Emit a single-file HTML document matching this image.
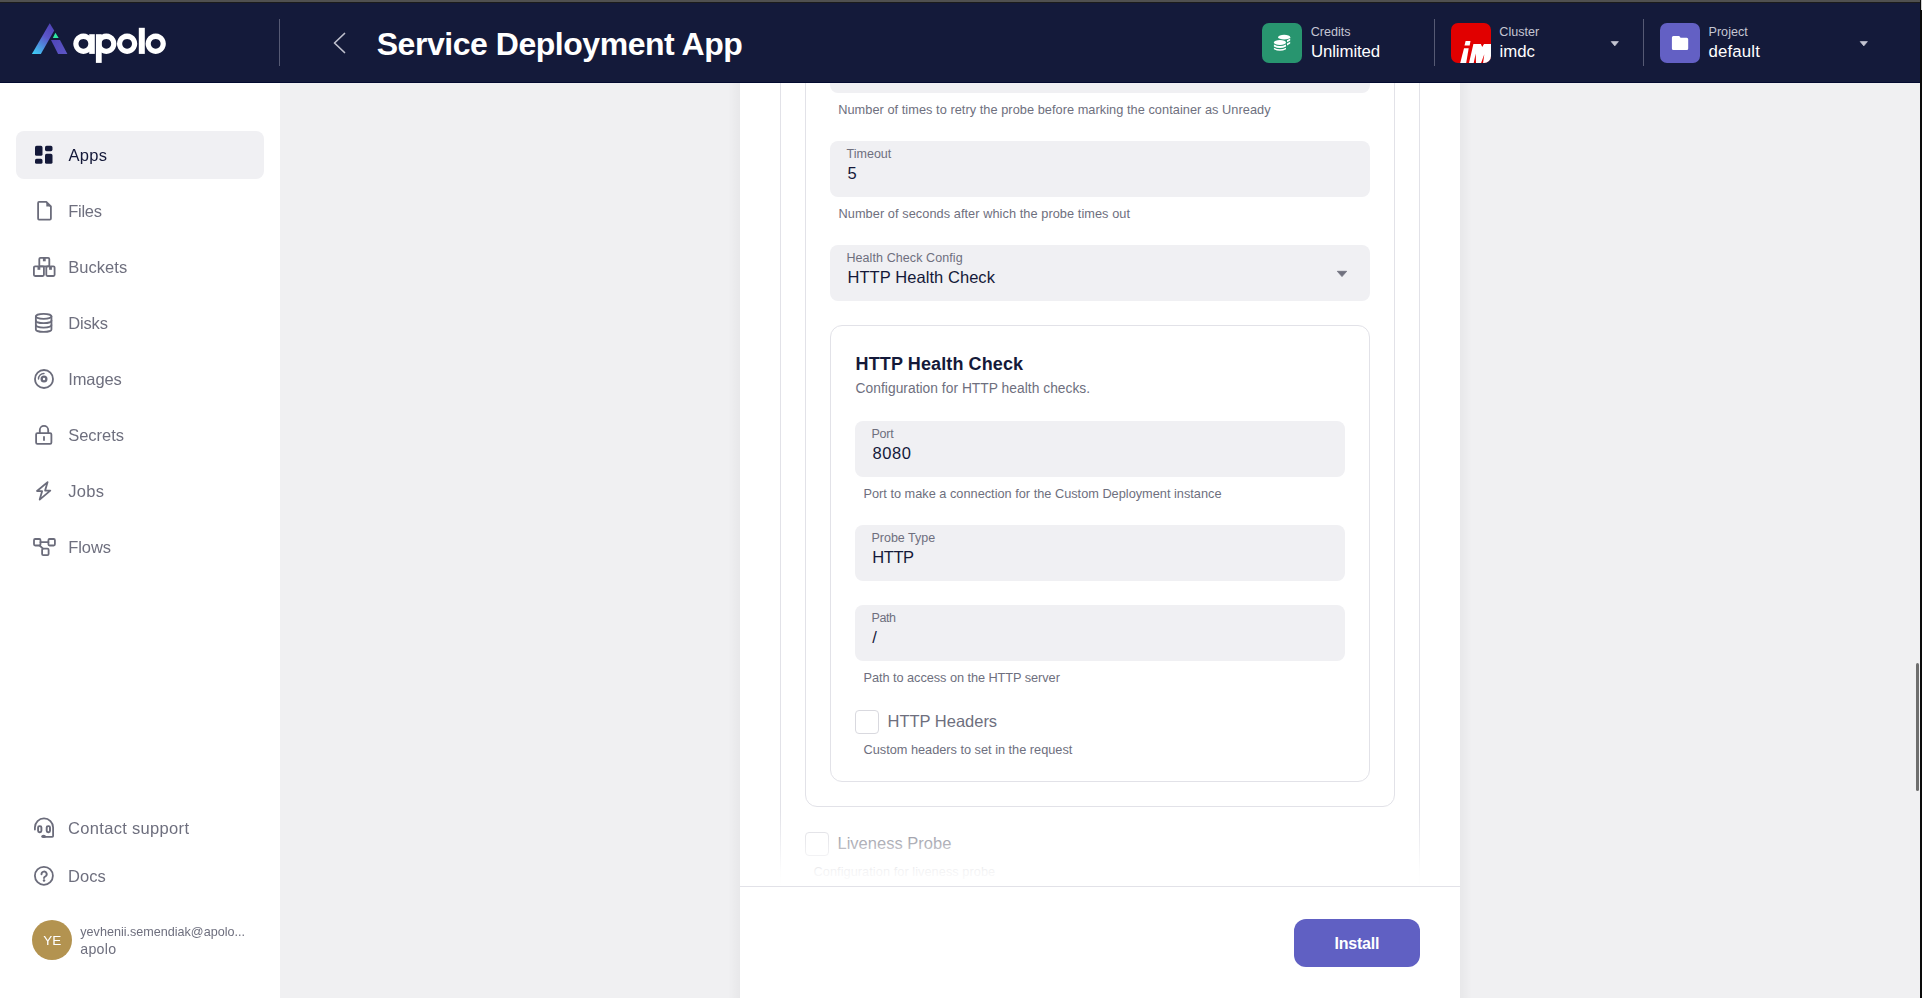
<!DOCTYPE html>
<html><head><meta charset="utf-8">
<style>
*{box-sizing:border-box;margin:0;padding:0}
html,body{width:1922px;height:998px;overflow:hidden;background:#f0f0f2;font-family:"Liberation Sans",sans-serif;position:relative}
.abs{position:absolute}
.t{position:absolute;white-space:nowrap;line-height:1}
.vsep{position:absolute;width:1px;background:#565a74}
.field{position:absolute;background:#f0f0f3;border-radius:8px}
.cb{position:absolute;width:24px;height:24px;border:1px solid #d9d9df;border-radius:4px;background:#fff}
</style></head><body>
<div class="abs" style="left:0;top:0;width:1922px;height:2px;background:#505050"></div>
<div class="abs" style="left:0;top:2px;width:1922px;height:1px;background:#1c1c1c"></div>
<div class="abs" style="left:0;top:3px;width:1920px;height:80px;background:#141a3a"></div>
<div class="abs" style="left:0;top:82px;width:1920px;height:1px;background:#030a30"></div>
<svg class="abs" style="left:0;top:0" width="180" height="70" viewBox="0 0 180 70">
<defs><linearGradient id="lg" x1="32" y1="54" x2="54" y2="24" gradientUnits="userSpaceOnUse"><stop offset="0" stop-color="#3dd3f7"/><stop offset="0.6" stop-color="#5b55c9"/><stop offset="1" stop-color="#4d40b3"/></linearGradient>
<linearGradient id="lg2" x1="51" y1="40" x2="67" y2="54" gradientUnits="userSpaceOnUse"><stop offset="0" stop-color="#4f45b8"/><stop offset="1" stop-color="#5d56c6"/></linearGradient></defs>
<path d="M31.9 53.9 L49.7 23.3 L54.2 30.6 L40.9 53.9 Z" fill="url(#lg)"/>
<path d="M51 40.1 L60 40.1 L67.4 53.9 L58.1 53.9 Z" fill="url(#lg2)"/>
<path d="M52.8 37.9 L55.4 32.8 L58.7 37.9 Z" fill="#2ee8a2"/>
<g fill="#fff">
<path fill-rule="evenodd" d="M83.4 33.6 a10.15 10.15 0 1 0 0.01 0 Z M83.4 38.9 a4.9 4.9 0 1 1 -0.01 0 Z"/>
<rect x="89.2" y="34.2" width="5.6" height="19.7"/>
<path fill-rule="evenodd" d="M106.3 33.6 a10.15 10.15 0 1 0 0.01 0 Z M106.3 38.9 a4.9 4.9 0 1 1 -0.01 0 Z"/>
<rect x="95.9" y="34.2" width="5.8" height="28.7"/>
<path fill-rule="evenodd" d="M127.1 33.6 a10.15 10.15 0 1 0 0.01 0 Z M127.1 38.9 a4.9 4.9 0 1 1 -0.01 0 Z"/>
<rect x="138.8" y="27.8" width="6" height="26.1"/>
<path fill-rule="evenodd" d="M155.7 33.6 a10.15 10.15 0 1 0 0.01 0 Z M155.7 38.9 a4.9 4.9 0 1 1 -0.01 0 Z"/>
</g></svg>
<div class="vsep" style="left:279px;top:19px;height:47px"></div>
<svg class="abs" style="left:330px;top:30px" width="18" height="26" viewBox="0 0 18 26"><path d="M14.5 3.5 L4.5 13 L14.5 22.5" fill="none" stroke="#bfc0cd" stroke-width="1.7" stroke-linecap="round" stroke-linejoin="round"/></svg>
<div class="t" style="left:376.70px;top:28.00px;font-size:32px;color:#fff;font-weight:bold;letter-spacing:-0.464px;">Service Deployment App</div>
<div class="abs" style="left:1262px;top:23px;width:40px;height:40px;border-radius:7px;background:#28956f"></div>
<svg class="abs" style="left:1262px;top:23px" width="40" height="40" viewBox="1262 23 40 40"><g fill="#fff">
<ellipse cx="1284.2" cy="37.2" rx="6.05" ry="2.35"/>
<path d="M1287 40.2 L1290.2 38.6 L1290.2 40.4 L1287 42.2 Z"/>
<path d="M1287 43.4 L1290.2 41.8 L1290.2 43.6 L1287 45.4 Z"/>
<ellipse cx="1279.95" cy="42.5" rx="6.05" ry="2.5"/>
<path d="M1273.9 44.6 Q1279.95 47.6 1286 44.6 L1286 46.4 Q1279.95 49.4 1273.9 46.4 Z"/>
<path d="M1273.9 47.8 Q1279.95 50.8 1286 47.8 L1286 49.2 Q1279.95 52.2 1273.9 49.2 Z"/>
</g></svg>
<div class="t" style="left:1310.70px;top:26.00px;font-size:12.6px;color:#c5c6d3;letter-spacing:-0.018px;">Credits</div>
<div class="t" style="left:1311.00px;top:44.00px;font-size:16.8px;color:#fff;letter-spacing:-0.102px;">Unlimited</div>
<div class="vsep" style="left:1434px;top:19px;height:47px"></div>
<svg class="abs" style="left:1451px;top:23px" width="40" height="40" viewBox="1451 23 40 40">
<defs><clipPath id="cc"><rect x="1451" y="23" width="40" height="40" rx="7"/></clipPath></defs>
<g clip-path="url(#cc)"><rect x="1451" y="23" width="40" height="40" fill="#e10000"/>
<g fill="#fff">
<path d="M1465.6 40.9 L1470.5 40.9 L1469.7 45.6 L1464.5 45.6 Z"/>
<path d="M1464 48.3 L1468.7 48.3 L1466.1 63.5 L1460.1 63.5 Z"/>
<path d="M1473.4 44.1 L1480.9 44.1 L1482.2 46.9 L1484 44.1 L1492 44.1 L1492 63.5 L1483 63.5 L1484.3 54.2 L1480.9 63.5 L1476 63.5 L1475.7 53.6 L1473.6 63.5 L1468.9 63.5 Z"/>
</g></g></svg>
<div class="t" style="left:1499.30px;top:26.00px;font-size:12.6px;color:#c5c6d3;letter-spacing:0.015px;">Cluster</div>
<div class="t" style="left:1499.50px;top:44.00px;font-size:16.8px;color:#fff;letter-spacing:0.003px;">imdc</div>
<svg class="abs" style="left:1609px;top:40px" width="12" height="8" viewBox="0 0 12 8"><path d="M2.2 1.6 L9.4 1.6 L5.8 5.9 Z" fill="#c5c6d3" stroke="#c5c6d3" stroke-width="0.7" stroke-linejoin="round"/></svg>
<div class="vsep" style="left:1643px;top:19px;height:47px"></div>
<div class="abs" style="left:1660px;top:23px;width:40px;height:40px;border-radius:7px;background:#6360c4"></div>
<svg class="abs" style="left:1660px;top:23px" width="40" height="40" viewBox="1660 23 40 40"><path d="M1673.4 36 L1679.2 36 L1680.6 37.8 L1686.7 37.8 Q1688.2 37.8 1688.2 39.3 L1688.2 48.6 Q1688.2 50.1 1686.7 50.1 L1673.4 50.1 Q1671.9 50.1 1671.9 48.6 L1671.9 37.5 Q1671.9 36 1673.4 36 Z" fill="#fff"/></svg>
<div class="t" style="left:1708.50px;top:26.00px;font-size:12.6px;color:#c5c6d3;letter-spacing:0.014px;">Project</div>
<div class="t" style="left:1708.50px;top:44.00px;font-size:16.8px;color:#fff;letter-spacing:0.176px;">default</div>
<svg class="abs" style="left:1858px;top:40px" width="12" height="8" viewBox="0 0 12 8"><path d="M2.2 1.6 L9.4 1.6 L5.8 5.9 Z" fill="#c5c6d3" stroke="#c5c6d3" stroke-width="0.7" stroke-linejoin="round"/></svg>
<div class="abs" style="left:1920px;top:0;width:2px;height:998px;background:#0a0a0a"></div>
<div class="abs" style="left:1921px;top:0;width:1px;height:10px;background:#cfcfcf"></div>
<div class="abs" style="left:0;top:83px;width:280px;height:915px;background:#fff"></div>
<div class="abs" style="left:16px;top:131px;width:248px;height:48px;border-radius:8px;background:#f0f0f3"></div>
<div class="abs" style="left:0;top:0;width:280px;height:998px;will-change:transform">
<div class="t" style="left:68.50px;top:147.00px;font-size:16.5px;color:#141939;letter-spacing:0.293px;">Apps</div>
<div class="t" style="left:68.20px;top:203.00px;font-size:16.5px;color:#6e6f7e;letter-spacing:-0.264px;">Files</div>
<div class="t" style="left:68.20px;top:259.00px;font-size:16.5px;color:#6e6f7e;letter-spacing:0.05px;">Buckets</div>
<div class="t" style="left:68.20px;top:315.00px;font-size:16.5px;color:#6e6f7e;letter-spacing:-0.136px;">Disks</div>
<div class="t" style="left:68.20px;top:371.00px;font-size:16.5px;color:#6e6f7e;letter-spacing:-0.104px;">Images</div>
<div class="t" style="left:68.20px;top:427.00px;font-size:16.5px;color:#6e6f7e;letter-spacing:-0.023px;">Secrets</div>
<div class="t" style="left:68.20px;top:483.00px;font-size:16.5px;color:#6e6f7e;letter-spacing:0.315px;">Jobs</div>
<div class="t" style="left:68.20px;top:539.00px;font-size:16.5px;color:#6e6f7e;letter-spacing:-0.052px;">Flows</div>
<div class="t" style="left:68.00px;top:820.00px;font-size:16.5px;color:#6e6f7e;letter-spacing:0.322px;">Contact support</div>
<div class="t" style="left:68.00px;top:868.00px;font-size:16.5px;color:#6e6f7e;letter-spacing:0.04px;">Docs</div>
<svg class="abs" style="left:0;top:0" width="280" height="998" viewBox="0 0 280 998">
<g fill="#141939">
<rect x="35" y="145.8" width="7.5" height="10" rx="1.6"/>
<rect x="35" y="158.8" width="7.5" height="5" rx="1.6"/>
<rect x="45" y="145.8" width="7.5" height="5.4" rx="1.6"/>
<rect x="45" y="153.8" width="7.5" height="10" rx="1.6"/>
</g>
<g fill="none" stroke="#6b6c7b" stroke-width="1.8" stroke-linejoin="round" stroke-linecap="round">
<path d="M39 201.9 L46.3 201.9 L50.9 206.5 L50.9 218.6 Q50.9 219.6 49.9 219.6 L39 219.6 Q38.1 219.6 38.1 218.6 L38.1 202.9 Q38.1 201.9 39 201.9 Z"/>
<!-- buckets -->
<rect x="39.3" y="257.9" width="10" height="8.5" rx="1.2"/>
<rect x="33.9" y="266.4" width="10" height="9.6" rx="1.2"/>
<rect x="46.3" y="266.4" width="8.3" height="9.6" rx="1.2"/>
<!-- disks -->
<ellipse cx="43.65" cy="316.3" rx="7.8" ry="2.5"/>
<path d="M35.85 316.3 L35.85 329.4 A7.8 2.5 0 0 0 51.45 329.4 L51.45 316.3"/>
<path d="M35.85 320.7 A7.8 2.5 0 0 0 51.45 320.7"/>
<path d="M35.85 325.1 A7.8 2.5 0 0 0 51.45 325.1"/>
<!-- images -->
<circle cx="44" cy="379" r="9"/>
<path d="M38.5 379 A5.5 5.5 0 0 1 44 373.5" stroke-width="1.4"/>
<!-- secrets -->
<rect x="36.1" y="433.2" width="15.3" height="10.6" rx="1.3"/>
<path d="M39.8 433.2 L39.8 430 A4.2 4.2 0 0 1 48.2 430 L48.2 433.2"/>
<path d="M44 437 L44 440"/>
<!-- jobs -->
<path d="M47.6 482.1 L37 491 L42.1 491.2 L39.7 499.6 L50.3 490.6 L45.1 490.5 Z"/>
<!-- flows -->
<rect x="34" y="539" width="6.5" height="6.5" rx="1.2"/>
<rect x="48.4" y="539" width="6.5" height="6.5" rx="1.2"/>
<rect x="42.1" y="548.6" width="6.5" height="6.5" rx="1.2"/>
<path d="M40.5 542.2 L48.4 542.2 M39.6 545.5 L43 548.6"/>
<!-- headset -->
<path d="M34.9 829.5 L34.9 827.5 A9.1 9.1 0 0 1 53.1 827.5 L53.1 836 Q53.1 836.9 52.2 836.9 L44 836.9"/>
<rect x="38.1" y="826.1" width="3.3" height="6.1" rx="1.4" stroke-width="1.9"/>
<rect x="46.7" y="826.1" width="3.3" height="6.1" rx="1.4" stroke-width="1.9"/>
<!-- docs -->
<circle cx="43.9" cy="875.8" r="9"/>
<path d="M41.5 874.2 A2.6 2.6 0 1 1 45.2 876.5 Q44 877.2 44 878" stroke-width="1.9"/>
</g>
<g fill="#6b6c7b">
<path d="M46.3 201.9 L46.3 206.5 L50.9 206.5 Z"/>
<rect x="42.9" y="257.9" width="2.8" height="3.4"/>
<rect x="37.5" y="266.4" width="2.8" height="3.4"/>
<rect x="49.1" y="266.4" width="2.8" height="3.4"/>
<circle cx="44" cy="379" r="3.5"/>
<circle cx="44" cy="880.4" r="1.25"/>
<ellipse cx="43.6" cy="836.4" rx="2.4" ry="1.7"/>
</g>
<circle cx="44" cy="379" r="1.2" fill="#fff"/>
</svg>
<div class="abs" style="left:32px;top:920px;width:40px;height:40px;border-radius:50%;background:#b39350"></div>
<div class="t" style="left:43.20px;top:934.00px;font-size:13.5px;color:#fff;">YE</div>
<div class="t" style="left:80.30px;top:926.00px;font-size:12.6px;color:#6e6f7e;letter-spacing:-0.003px;">yevhenii.semendiak@apolo...</div>
<div class="t" style="left:80.30px;top:942.00px;font-size:14.2px;color:#6e6f7e;letter-spacing:0.261px;">apolo</div>
</div>
<div class="abs" style="left:728px;top:83px;width:744px;height:915px;background:linear-gradient(to right,rgba(0,0,0,0) 0,rgba(0,0,0,0.035) 12px,rgba(0,0,0,0.035) 732px,rgba(0,0,0,0) 744px)"></div>
<div class="abs" style="left:740px;top:83px;width:720px;height:915px;background:#fff;overflow:hidden">
<div class="abs" style="left:40px;top:-63px;width:640px;height:1000px;border:1px solid #e2e2e8;border-radius:12px"></div>
<div class="abs" style="left:65px;top:-63px;width:590px;height:787px;border:1px solid #e2e2e8;border-radius:12px"></div>
<div class="abs" style="left:90px;top:-43px;width:540px;height:53px;background:#f0f0f3;border-radius:8px"></div>
<div class="t" style="left:98.20px;top:21.00px;font-size:12.75px;color:#6e6f7e;letter-spacing:0.05px;">Number of times to retry the probe before marking the container as Unready</div>
<div class="abs" style="left:90px;top:58px;width:540px;height:56px;background:#f0f0f3;border-radius:8px"></div>
<div class="t" style="left:106.60px;top:65.00px;font-size:12.5px;color:#6e6f7e;">Timeout</div>
<div class="t" style="left:107.40px;top:82.00px;font-size:16.5px;color:#141939;">5</div>
<div class="t" style="left:98.50px;top:125.00px;font-size:12.75px;color:#6e6f7e;letter-spacing:0.064px;">Number of seconds after which the probe times out</div>
<div class="abs" style="left:90px;top:162px;width:540px;height:56px;background:#f0f0f3;border-radius:8px"></div>
<div class="t" style="left:106.40px;top:169.00px;font-size:12.5px;color:#6e6f7e;letter-spacing:0.091px;">Health Check Config</div>
<div class="t" style="left:107.50px;top:186.00px;font-size:16.5px;color:#141939;letter-spacing:0.064px;">HTTP Health Check</div>
<svg class="abs" style="left:596px;top:187px" width="12" height="8" viewBox="0 0 12 8"><path d="M1.3 1.3 L10.7 1.3 L6 6.6 Z" fill="#70717e" stroke="#70717e" stroke-width="0.8" stroke-linejoin="round"/></svg>
<div class="abs" style="left:90px;top:242px;width:540px;height:457px;border:1px solid #e2e2e8;border-radius:12px"></div>
<div class="t" style="left:115.60px;top:272.00px;font-size:18px;color:#141939;font-weight:bold;letter-spacing:0.11px;">HTTP Health Check</div>
<div class="t" style="left:115.60px;top:299.00px;font-size:13.8px;color:#6e6f7e;letter-spacing:0.025px;">Configuration for HTTP health checks.</div>
<div class="abs" style="left:115px;top:338px;width:490px;height:56px;background:#f0f0f3;border-radius:8px"></div>
<div class="t" style="left:131.40px;top:345.00px;font-size:12.5px;color:#6e6f7e;letter-spacing:-0.212px;">Port</div>
<div class="t" style="left:132.50px;top:362.00px;font-size:16.5px;color:#141939;letter-spacing:0.596px;">8080</div>
<div class="t" style="left:123.50px;top:405.00px;font-size:12.75px;color:#6e6f7e;letter-spacing:0.002px;">Port to make a connection for the Custom Deployment instance</div>
<div class="abs" style="left:115px;top:442px;width:490px;height:56px;background:#f0f0f3;border-radius:8px"></div>
<div class="t" style="left:131.50px;top:449.00px;font-size:12.5px;color:#6e6f7e;letter-spacing:-0.013px;">Probe Type</div>
<div class="t" style="left:132.30px;top:466.00px;font-size:16.5px;color:#141939;letter-spacing:-0.422px;">HTTP</div>
<div class="abs" style="left:115px;top:522px;width:490px;height:56px;background:#f0f0f3;border-radius:8px"></div>
<div class="t" style="left:131.50px;top:529.00px;font-size:12.5px;color:#6e6f7e;letter-spacing:-0.406px;">Path</div>
<div class="t" style="left:132.30px;top:546.00px;font-size:16.5px;color:#141939;">/</div>
<div class="t" style="left:123.60px;top:589.00px;font-size:12.75px;color:#6e6f7e;letter-spacing:-0.059px;">Path to access on the HTTP server</div>
<div class="abs" style="left:115px;top:627px;width:24px;height:24px;border:1px solid #d9d9df;border-radius:4px"></div>
<div class="t" style="left:147.50px;top:630.00px;font-size:16.5px;color:#6e6f7e;letter-spacing:-0.011px;">HTTP Headers</div>
<div class="t" style="left:123.50px;top:661.00px;font-size:12.75px;color:#6e6f7e;letter-spacing:-0.008px;">Custom headers to set in the request</div>
<div class="abs" style="left:65px;top:749px;width:24px;height:24px;border:1px solid #d9d9df;border-radius:4px"></div>
<div class="t" style="left:97.50px;top:752.00px;font-size:16.5px;color:#6e6f7e;letter-spacing:0.006px;">Liveness Probe</div>
<div class="t" style="left:73.50px;top:783.00px;font-size:12.75px;color:#6e6f7e;letter-spacing:0.054px;">Configuration for liveness probe</div>
<div class="abs" style="left:0px;top:729px;width:720px;height:75px;background:linear-gradient(to bottom,rgba(255,255,255,0) 0,rgba(255,255,255,0.45) 31px,rgba(255,255,255,0.92) 59px,rgba(255,255,255,1) 75px)"></div>
<div class="abs" style="left:0px;top:803px;width:720px;height:112px;background:#fff;border-top:1px solid #e2e2e8"></div>
<div class="abs" style="left:554px;top:836px;width:126px;height:48px;background:#6060c3;border-radius:12px"></div>
<div class="t" style="left:594.60px;top:853.00px;font-size:16px;color:#fff;font-weight:bold;letter-spacing:-0.24px;">Install</div>
</div>
<div class="abs" style="left:1916px;top:663px;width:3px;height:128px;border-radius:2px;background:#6e6e6e"></div>
</body></html>
